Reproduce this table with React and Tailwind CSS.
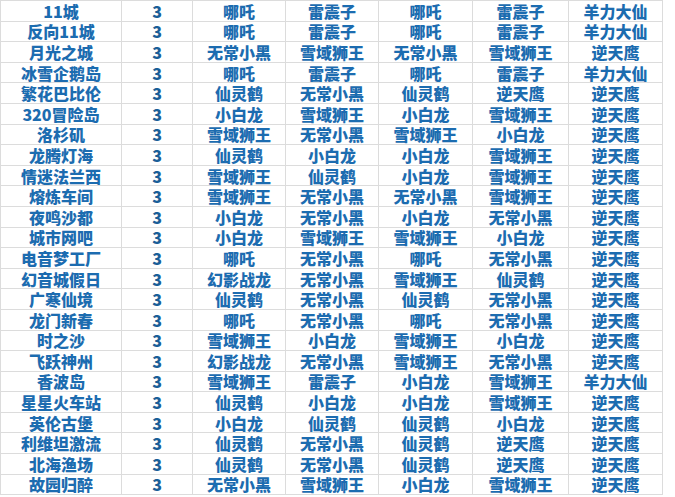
import React from "react";

const rows = [
  ["11城", "3", "哪吒", "雷震子", "哪吒", "雷震子", "羊力大仙"],
  ["反向11城", "3", "哪吒", "雷震子", "哪吒", "雷震子", "羊力大仙"],
  ["月光之城", "3", "无常小黑", "雪域狮王", "无常小黑", "雪域狮王", "逆天鹰"],
  ["冰雪企鹅岛", "3", "哪吒", "雷震子", "哪吒", "雷震子", "羊力大仙"],
  ["繁花巴比伦", "3", "仙灵鹤", "无常小黑", "仙灵鹤", "逆天鹰", "逆天鹰"],
  ["320冒险岛", "3", "小白龙", "雪域狮王", "小白龙", "雪域狮王", "逆天鹰"],
  ["洛杉矶", "3", "雪域狮王", "无常小黑", "雪域狮王", "小白龙", "逆天鹰"],
  ["龙腾灯海", "3", "仙灵鹤", "小白龙", "小白龙", "雪域狮王", "逆天鹰"],
  ["情迷法兰西", "3", "雪域狮王", "仙灵鹤", "小白龙", "雪域狮王", "逆天鹰"],
  ["熔炼车间", "3", "雪域狮王", "无常小黑", "无常小黑", "雪域狮王", "逆天鹰"],
  ["夜鸣沙都", "3", "小白龙", "无常小黑", "小白龙", "无常小黑", "逆天鹰"],
  ["城市网吧", "3", "小白龙", "雪域狮王", "雪域狮王", "小白龙", "逆天鹰"],
  ["电音梦工厂", "3", "哪吒", "无常小黑", "哪吒", "无常小黑", "逆天鹰"],
  ["幻音城假日", "3", "幻影战龙", "无常小黑", "雪域狮王", "仙灵鹤", "逆天鹰"],
  ["广寒仙境", "3", "仙灵鹤", "无常小黑", "仙灵鹤", "无常小黑", "逆天鹰"],
  ["龙门新春", "3", "哪吒", "无常小黑", "哪吒", "无常小黑", "逆天鹰"],
  ["时之沙", "3", "雪域狮王", "小白龙", "雪域狮王", "小白龙", "逆天鹰"],
  ["飞跃神州", "3", "幻影战龙", "无常小黑", "雪域狮王", "无常小黑", "逆天鹰"],
  ["香波岛", "3", "雪域狮王", "雷震子", "小白龙", "雪域狮王", "羊力大仙"],
  ["星星火车站", "3", "仙灵鹤", "小白龙", "小白龙", "雪域狮王", "逆天鹰"],
  ["英伦古堡", "3", "小白龙", "仙灵鹤", "仙灵鹤", "小白龙", "逆天鹰"],
  ["利维坦激流", "3", "仙灵鹤", "无常小黑", "仙灵鹤", "逆天鹰", "逆天鹰"],
  ["北海渔场", "3", "仙灵鹤", "无常小黑", "仙灵鹤", "逆天鹰", "逆天鹰"],
  ["故园归醉", "3", "无常小黑", "雪域狮王", "小白龙", "雪域狮王", "逆天鹰"],
];

export default function App() {
  return (
    <div className="w-[675px] h-[497px] bg-white overflow-hidden">
      <table className="border-collapse table-fixed w-[662px] font-['Noto_Sans_CJK_SC',sans-serif] font-black text-[16px] leading-none text-[#1c6cb0]">
        <colgroup>
          <col className="w-[121px]" />
          <col className="w-[71px]" />
          <col className="w-[93px]" />
          <col className="w-[93px]" />
          <col className="w-[94px]" />
          <col className="w-[96px]" />
          <col className="w-[94px]" />
        </colgroup>
        <tbody>
          {rows.map((r, i) => (
            <tr key={i} className="h-[20.6px]">
              {r.map((c, j) => (
                <td
                  key={j}
                  className={`border border-[#dcdcdc] text-center p-0 ${j === 1 ? "text-[#1a5f98]" : ""}`}
                >
                  {c}
                </td>
              ))}
            </tr>
          ))}
        </tbody>
      </table>
    </div>
  );
}
